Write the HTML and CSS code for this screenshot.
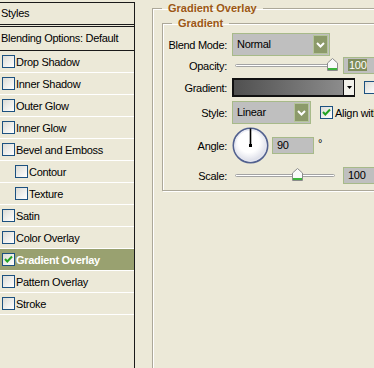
FILE: index.html
```html
<!DOCTYPE html>
<html lang="en">
<head>
    <meta charset="UTF-8">
    <title>Layer Style - Gradient Overlay</title>
    <link rel="stylesheet" href="styles.css">
</head>
<body>

    <div class="dialog">
        <div class="styles-panel">
            <div class="panel-head">Styles</div>
            <div class="panel-blend">Blending Options: Default</div>
            <ul class="effects">
                <li class="effect"><span class="check"></span>Drop Shadow</li>
                <li class="effect"><span class="check"></span>Inner Shadow</li>
                <li class="effect"><span class="check"></span>Outer Glow</li>
                <li class="effect"><span class="check"></span>Inner Glow</li>
                <li class="effect"><span class="check"></span>Bevel and Emboss</li>
                <li class="effect effect-sub"><span class="check"></span>Contour</li>
                <li class="effect effect-sub"><span class="check"></span>Texture</li>
                <li class="effect"><span class="check"></span>Satin</li>
                <li class="effect"><span class="check"></span>Color Overlay</li>
                <li class="effect effect-on">
                    <span class="check">
                        <svg width="11" height="11" viewBox="0 0 11 11"><path d="M2 5 L4.3 7.5 L9 2.5" fill="none" stroke="#22A322" stroke-width="2"/></svg>
                    </span>Gradient Overlay
                </li>
                <li class="effect"><span class="check"></span>Pattern Overlay</li>
                <li class="effect"><span class="check"></span>Stroke</li>
            </ul>
        </div>

        <div class="options">
            <fieldset class="group group-outer">
                <legend>Gradient Overlay</legend>
                <fieldset class="group group-inner">
                    <legend>Gradient</legend>

                    <div class="row row-blend">
                        <span class="label">Blend Mode:</span>
                        <div class="select select-blend">
                            <span class="select-text">Normal</span>
                            <span class="select-btn">
                                <svg width="9" height="6" viewBox="0 0 9 6"><path d="M1 1 L4.5 4.5 L8 1" fill="none" stroke="#fff" stroke-width="2"/></svg>
                            </span>
                        </div>
                    </div>

                    <div class="row row-opacity">
                        <span class="label">Opacity:</span>
                        <div class="slider slider-opacity">
                            <span class="thumb" style="left: 100%">
                                <svg width="11" height="13" viewBox="0 0 11 13"><path d="M0.5 12.5 V5 L5.5 0.5 L10.5 5 V12.5 Z" fill="#fafafa" stroke="#8c8c8c"/><rect x="1" y="10" width="9" height="2" fill="#3cb43c"/></svg>
                            </span>
                        </div>
                        <div class="field field-opacity"><span class="selected">100</span></div>
                    </div>

                    <div class="row row-gradient">
                        <span class="label">Gradient:</span>
                        <div class="gradient-pick">
                            <span class="gradient-fill"></span>
                            <span class="gradient-btn">
                                <svg width="5" height="3" viewBox="0 0 5 3"><path d="M0 0 H5 L2.5 3 Z" fill="#000"/></svg>
                            </span>
                        </div>
                        <span class="check check-reverse"></span>
                    </div>

                    <div class="row row-style">
                        <span class="label">Style:</span>
                        <div class="select select-style">
                            <span class="select-text">Linear</span>
                            <span class="select-btn">
                                <svg width="9" height="6" viewBox="0 0 9 6"><path d="M1 1 L4.5 4.5 L8 1" fill="none" stroke="#fff" stroke-width="2"/></svg>
                            </span>
                        </div>
                        <span class="check check-align">
                            <svg width="11" height="11" viewBox="0 0 11 11"><path d="M2 5 L4.3 7.5 L9 2.5" fill="none" stroke="#22A322" stroke-width="2"/></svg>
                        </span>
                        <span class="align-text">Align with Layer</span>
                    </div>

                    <div class="row row-angle">
                        <span class="label">Angle:</span>
                        <svg class="dial" width="37" height="37" viewBox="0 0 37 37">
                            <defs>
                                <radialGradient id="dialFill" cx="45%" cy="40%" r="60%">
                                    <stop offset="0.5" stop-color="#ffffff"/>
                                    <stop offset="1" stop-color="#d6d8e4"/>
                                </radialGradient>
                            </defs>
                            <circle cx="18.5" cy="18.5" r="17.2" fill="url(#dialFill)" stroke="#52618f" stroke-width="1.6"/>
                            <circle cx="18.5" cy="18.5" r="15.6" fill="none" stroke="#e6e8f2" stroke-width="1"/>
                            <line x1="18.5" y1="18.5" x2="18.5" y2="1.5" stroke="#000" stroke-width="1.6"/>
                            <rect x="17" y="17" width="3" height="3" fill="#000"/>
                        </svg>
                        <div class="field field-angle">90</div>
                        <span class="degree">°</span>
                    </div>

                    <div class="row row-scale">
                        <span class="label">Scale:</span>
                        <div class="slider slider-scale">
                            <span class="thumb" style="left: 62%">
                                <svg width="11" height="13" viewBox="0 0 11 13"><path d="M0.5 12.5 V5 L5.5 0.5 L10.5 5 V12.5 Z" fill="#fafafa" stroke="#8c8c8c"/><rect x="1" y="10" width="9" height="2" fill="#3cb43c"/></svg>
                            </span>
                        </div>
                        <div class="field field-scale">100</div>
                    </div>
                </fieldset>
            </fieldset>
        </div>
    </div>

</body>
</html>
```

FILE: styles.css
```css
body {
    margin: 0;
    background-color: #ece9d8;
    font-family: "Liberation Sans", Arial, sans-serif;
    font-size: 11px;
    letter-spacing: -0.3px;
    color: #000;
    overflow: hidden;
}
.dialog {
    display: flex;
    height: 100vh;
}

/* left list of effects */
.styles-panel {
    width: 134px;
    flex: none;
    margin-top: 2px;
    border-top: 1px solid #1a1a1a;
    border-right: 1px solid #1a1a1a;
}
.panel-head {
    height: 21px;
    line-height: 21px;
    padding-left: 1px;
    border-bottom: 3px double #1a1a1a;
}
.panel-blend {
    height: 23px;
    line-height: 23px;
    padding-left: 1px;
    border-bottom: 1px solid #1a1a1a;
}
.effects {
    list-style: none;
    margin: 0;
    padding: 0;
}
.effect {
    display: flex;
    align-items: center;
    gap: 1px;
    height: 21px;
    padding-left: 2px;
    border-bottom: 1px solid #fff;
}
.effect-sub {
    padding-left: 15px;
}
.effect-on {
    background-color: #99a170;
    color: #fff;
    font-weight: bold;
}
.check {
    display: flex;
    align-items: center;
    justify-content: center;
    width: 13px;
    height: 13px;
    box-sizing: border-box;
    flex: none;
    border: 1px solid #1c5180;
    background: linear-gradient(135deg, #dcdcd6, #fff);
}

/* right options */
.options {
    flex: 1;
    padding-left: 17px;
}
.group {
    margin: 0;
    padding: 0;
    min-width: 0;
    border: 1px solid #aca899;
    box-shadow: inset 1px 1px 0 #fff, 1px 1px 0 #fff;
}
.group legend {
    padding: 0 6px;
    margin-left: 9px;
    line-height: 13px;
    font-weight: bold;
    color: #9c5714;
    letter-spacing: 0;
}
.group-outer {
    margin-top: 2px;
    width: 300px;
    height: 420px;
}
.group-inner {
    margin-top: 2px;
    margin-left: 9px;
    width: 260px;
    padding-bottom: 6px;
}

.row {
    display: flex;
    align-items: center;
}
.label {
    width: 64px;
    flex: none;
    margin-right: 5px;
    text-align: right;
}
.row-blend { margin-top: 3px; height: 23px; }
.row-opacity { margin-top: 1px; height: 17px; }
.row-gradient { margin-top: 4px; height: 19px; }
.row-style { margin-top: 4px; height: 23px; }
.row-angle { margin-top: 3px; height: 37px; }
.row-scale { margin-top: 3px; height: 17px; }

.select {
    display: flex;
    height: 23px;
    box-sizing: border-box;
    border: 1px solid #a7ba89;
    background-color: #bfbfbf;
    padding: 1px;
}
.select-blend { width: 98px; }
.select-style { width: 79px; }
.select-text {
    flex: 1;
    padding-left: 3px;
    line-height: 19px;
}
.select-btn {
    display: flex;
    align-items: center;
    justify-content: center;
    width: 15px;
    box-sizing: border-box;
    border: 1px solid #b4c49a;
    background-color: #8c9a6a;
}

.slider {
    position: relative;
    height: 1px;
    border: 1px solid #a3a3a3;
    border-radius: 2px;
    background-color: #fff;
    margin-left: 3px;
}
.slider-opacity { width: 96px; margin-right: 10px; }
.slider-scale { width: 98px; margin-right: 8px; }
.thumb {
    position: absolute;
    top: -7px;
    margin-left: -5px;
    line-height: 0;
}

.field {
    height: 17px;
    box-sizing: border-box;
    border: 1px solid #a7ba89;
    background-color: #bfbfbf;
    padding-left: 4px;
    line-height: 15px;
    width: 42px;
    flex: none;
}
.selected {
    background-color: #7f8d5c;
    color: #fff;
    padding: 0 1px;
}

.gradient-pick {
    display: flex;
    width: 123px;
    height: 19px;
    box-sizing: border-box;
    border: 2px solid #111;
    border-right-width: 1px;
}
.gradient-fill {
    flex: 1;
    background: linear-gradient(to right, #505050, #8c8c8c);
}
.gradient-btn {
    display: flex;
    align-items: center;
    justify-content: center;
    width: 10px;
    border-left: 1px solid #111;
    background-color: #f2f1ea;
}
.check-reverse {
    margin-left: 9px;
}
.check-align {
    margin-left: 9px;
}
.align-text {
    margin-left: 2px;
    white-space: nowrap;
}

.dial {
    flex: none;
}
.field-angle {
    margin-left: 3px;
}
.degree {
    align-self: flex-start;
    margin-top: 10px;
    margin-left: 4px;
}
```
